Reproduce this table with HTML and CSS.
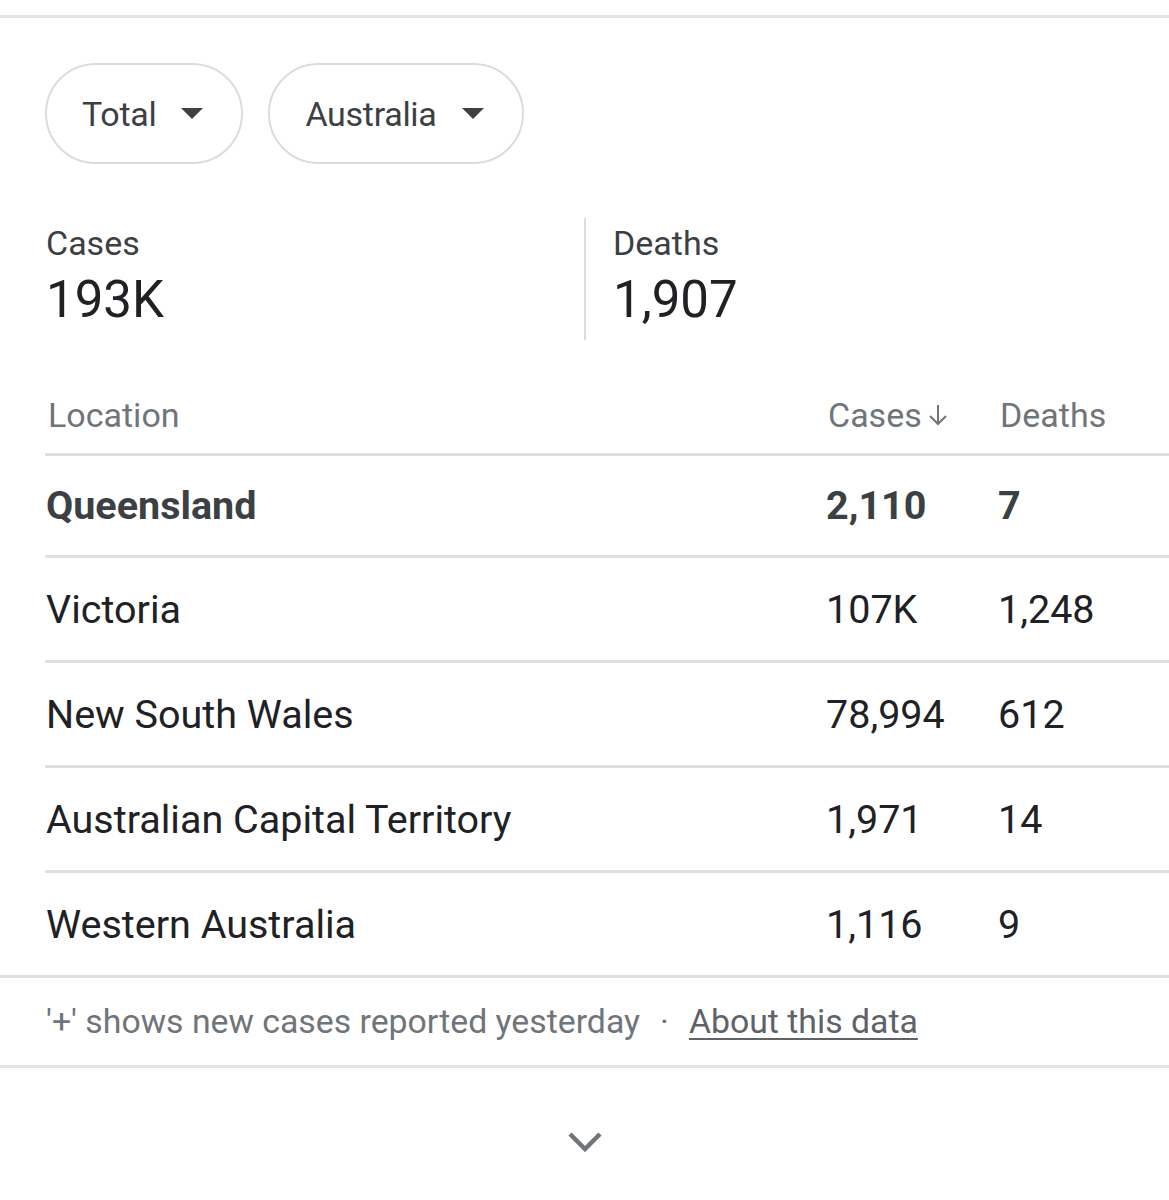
FILE: index.html
```html
<!DOCTYPE html>
<html>
<head>
<meta charset="utf-8">
<link rel="stylesheet" href="styles.css">
</head>
<body>
<div class="topline"></div>
<div class="chips">
  <div class="chip">Total <svg class="tri" viewBox="0 0 22 11"><path d="M0 0H22L11 11Z"/></svg></div>
  <div class="chip">Australia <svg class="tri" viewBox="0 0 22 11"><path d="M0 0H22L11 11Z"/></svg></div>
</div>
<div class="stats">
  <div class="stat">
    <div class="stat-label">Cases</div>
    <div class="stat-value">193K</div>
  </div>
  <div class="stat stat-right">
    <div class="stat-label">Deaths</div>
    <div class="stat-value">1,907</div>
  </div>
</div>
<div class="table">
  <div class="row head">
    <div class="c-loc">Location</div>
    <div class="c-num">Cases<svg class="arrow" viewBox="0 0 22 24"><path d="M11 2V21M3 13L11 21L19 13" fill="none" stroke="#70757a" stroke-width="2"/></svg></div>
    <div class="c-num">Deaths</div>
  </div>
  <div class="row bold first">
    <div class="c-loc">Queensland</div>
    <div class="c-num">2,110</div>
    <div class="c-num">7</div>
  </div>
  <div class="row">
    <div class="c-loc">Victoria</div>
    <div class="c-num">107K</div>
    <div class="c-num">1,248</div>
  </div>
  <div class="row">
    <div class="c-loc">New South Wales</div>
    <div class="c-num">78,994</div>
    <div class="c-num">612</div>
  </div>
  <div class="row">
    <div class="c-loc">Australian Capital Territory</div>
    <div class="c-num">1,971</div>
    <div class="c-num">14</div>
  </div>
  <div class="row last">
    <div class="c-loc">Western Australia</div>
    <div class="c-num">1,116</div>
    <div class="c-num">9</div>
  </div>
</div>
<div class="footer">
  <span>'+' shows new cases reported yesterday</span>
  <span class="dot">·</span>
  <a class="about">About this data</a>
</div>
<div class="more">
  <svg class="chev" viewBox="0 0 34 20"><path d="M2 2L17 17L32 2" fill="none" stroke="#70757a" stroke-width="4.5"/></svg>
</div>
</body>
</html>
```
FILE: styles.css
```css
* { box-sizing: border-box; }
body {
  margin: 0;
  background: #fff;
  font-family: Roboto, "Noto Sans", sans-serif;
  color: #202124;
}
.topline {
  margin-top: 15px;
  border-top: 3px solid #e3e3e6;
}
.chips {
  display: flex;
  gap: 25px;
  padding-left: 45px;
  margin-top: 45px;
}
.chip {
  height: 101px;
  border: 2px solid #dcdcdf;
  border-radius: 51px;
  display: flex;
  align-items: center;
  padding: 0 38px 0 35px;
  font-size: 34px;
  color: #3c4043;
  letter-spacing: -0.3px;
}
.tri {
  width: 22px;
  height: 11px;
  margin-left: 25px;
  fill: #3c4043;
}
.stats {
  display: flex;
  margin-top: 54px;
  padding-left: 46px;
}
.stat {
  width: 538px;
  height: 122px;
  padding-top: 6px;
}
.stat-right {
  border-left: 2px solid #dadce0;
  padding-left: 27px;
}
.stat-label {
  font-size: 34px;
  color: #3c4043;
  line-height: 38px;
}
.stat-value {
  font-size: 51px;
  line-height: 60px;
  margin-top: 8px;
}
.table {
  margin-left: 45px;
  margin-top: 40px;
}
.row {
  display: grid;
  grid-template-columns: 781px 172px 1fr;
  height: 105px;
  align-items: center;
  border-bottom: 3px solid #dfe0e2;
  font-size: 39.5px;
}
.row.first { height: 102px; }
.row .c-loc { padding-left: 1px; }
.row.head {
  height: 76px;
  align-items: start;
  color: #70757a;
  font-size: 34px;
  padding-top: 15px;
}
.row.head .c-loc { padding-left: 3px; }
.row.head .c-num:nth-child(2) { padding-left: 2px; display: flex; align-items: center; }
.row.head .c-num:nth-child(3) { padding-left: 2px; }
.arrow { width: 22px; height: 24px; margin-left: 5px; }
.row.bold { font-weight: 700; color: #3c4043; }
.row.last { margin-left: -45px; padding-left: 45px; }
.footer {
  height: 90px;
  display: flex;
  align-items: center;
  padding-left: 46px;
  font-size: 33.8px;
  color: #70757a;
  border-bottom: 3px solid #e3e3e6;
}
.dot { margin: 0 20px; }
.about {
  color: #5f6368;
  text-decoration: underline;
  text-underline-offset: 5px;
  text-decoration-thickness: 2px;
}
.more {
  height: 131px;
  display: flex;
  justify-content: center;
  align-items: center;
}
.chev { width: 34px; height: 20px; margin-top: 17px; }
```
